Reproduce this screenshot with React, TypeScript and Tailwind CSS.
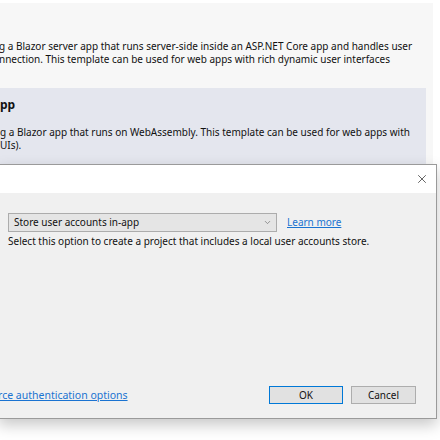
import { X, ChevronDown } from "lucide-react";

export default function App() {
  return (
    <div className="relative w-[440px] h-[440px] overflow-hidden bg-white text-[10px] text-[#111] [font-family:'Noto_Sans',sans-serif]">
      {/* template list behind the dialog */}
      <div className="w-[433px] h-[164px] mt-[3px] flex flex-col bg-[#f7f7f7]">
        <div className="pt-[37px] -ml-[1px] leading-[13px]">
          <p>g a Blazor server app that runs server-side inside an ASP.NET Core app and handles user</p>
          <p>nnection. This template can be used for web apps with rich dynamic user interfaces</p>
        </div>
        <div className="mt-[22px] flex-1 w-[426px] bg-[#e4e6ee] pt-[9px] leading-[13px]">
          <p className="text-[12px] font-bold leading-[16px]">pp</p>
          <p className="mt-[13px]">g a Blazor app that runs on WebAssembly. This template can be used for web apps with</p>
          <p>UIs).</p>
        </div>
      </div>

      {/* authentication dialog */}
      <div className="absolute left-[-2px] top-[164px] w-[439px] h-[255px] flex flex-col border border-[#9a9a9a] bg-[#f0f0f0] shadow-[0_6px_14px_rgba(0,0,0,0.22)]">
        <div className="h-[28px] bg-white flex items-center justify-end pr-[7px]">
          <X className="w-[14px] h-[14px] text-[#222]" strokeWidth={1.2} />
        </div>
        <div className="flex-1 flex flex-col pl-[9px] pr-[20px] pt-[20px] pb-[14px]">
          <div className="flex items-center gap-[10px]">
            <div className="w-[269px] h-[19px] flex items-center justify-between pl-[5px] pr-[4px] bg-[#e5e5e5] border border-[#acacac]">
              <span>Store user accounts in-app</span>
              <ChevronDown className="w-[9px] h-[9px] text-[#777]" strokeWidth={2} />
            </div>
            <a className="text-[#1a73d1] underline">Learn more</a>
          </div>
          <p className="mt-[2px] leading-[14px]">Select this option to create a project that includes a local user accounts store.</p>
          <div className="mt-auto flex items-center justify-between">
            <a className="-ml-[10px] pt-[3px] text-[10.5px] text-[#1a73d1] underline">rce authentication options</a>
            <div className="flex gap-[8px]">
              <button className="w-[74px] h-[18px] bg-[#e1e1e1] border border-[#0078d7] leading-[16px]">OK</button>
              <button className="w-[65px] h-[18px] bg-[#e1e1e1] border border-[#adadad] leading-[16px]">Cancel</button>
            </div>
          </div>
        </div>
      </div>
    </div>
  );
}
